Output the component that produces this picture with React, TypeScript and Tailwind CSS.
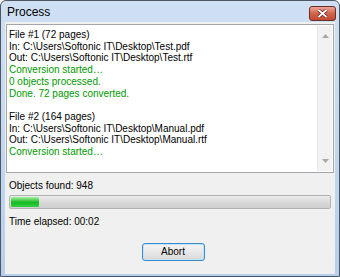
import React from "react";

const font = { fontFamily: '"Liberation Sans", Arial, sans-serif' };

function ScrollArrow({ up }: { up?: boolean }) {
  return (
    <svg width="7" height="4" viewBox="0 0 7 4">
      {up ? <path d="M0 4 L3.5 0 L7 4 Z" fill="#a8a8a8" /> : <path d="M0 0 L3.5 4 L7 0 Z" fill="#a8a8a8" />}
    </svg>
  );
}

export default function App() {
  const lines: { t: string; g?: boolean }[] = [
    { t: "File #1 (72 pages)" },
    { t: "In: C:\\Users\\Softonic IT\\Desktop\\Test.pdf" },
    { t: "Out: C:\\Users\\Softonic IT\\Desktop\\Test.rtf" },
    { t: "Conversion started\u2026", g: true },
    { t: "0 objects processed.", g: true },
    { t: "Done. 72 pages converted.", g: true },
    { t: "\u00a0" },
    { t: "File #2 (164 pages)" },
    { t: "In: C:\\Users\\Softonic IT\\Desktop\\Manual.pdf" },
    { t: "Out: C:\\Users\\Softonic IT\\Desktop\\Manual.rtf" },
    { t: "Conversion started\u2026", g: true },
  ];
  return (
    <div className="w-[340px] h-[277px] bg-white" style={font}>
      <div className="w-[340px] h-[277px] flex flex-col rounded-t-[6px] border border-[#4c5664] bg-gradient-to-b from-[#cfe0f4] to-[#b7cfea] overflow-hidden">
        {/* Title bar */}
        <div className="h-[21px] shrink-0 flex items-center justify-between pl-[6px] pr-[3px]">
          <span className="text-[12px] text-black leading-none">Process</span>
          <div className="w-[27px] h-[15px] mt-[4px] rounded-[3px] border border-[#6b2d24] bg-gradient-to-b from-[#e9a797] via-[#d1634d] to-[#c24a33] flex items-center justify-center">
            <svg width="11" height="9" viewBox="0 0 11 9">
              <path d="M1.5 1 L9.5 8 M9.5 1 L1.5 8" stroke="#5a1a12" strokeWidth="3.2" />
              <path d="M1.5 1 L9.5 8 M9.5 1 L1.5 8" stroke="#ffffff" strokeWidth="1.8" />
            </svg>
          </div>
        </div>
        {/* Client */}
        <div className="mx-[4px] mb-[2px] flex-1 bg-[#f0f0f0] flex flex-col px-[1px] pt-[2px]">
          <div className="h-[149px] border border-[#a3a6ab] bg-white flex">
            <div className="flex-1 pl-[2px] pt-[4px] text-[10px] leading-[11.7px]">
              {lines.map((l, i) => (
                <div key={i} className={l.g ? "text-[#009a00]" : "text-black"}>
                  {l.t}
                </div>
              ))}
            </div>
            <div className="w-[15px] my-[1px] mr-[1px] bg-[#f2f2f2] border-l border-[#e8e8e8] flex flex-col items-center justify-between py-[8px]">
              <ScrollArrow up />
              <ScrollArrow />
            </div>
          </div>
          <div className="pl-[3px] mt-[7px] text-[10px] leading-[12px] text-black">Objects found: 948</div>
          <div className="mx-[3px] mt-[3px] h-[14px] rounded-[2px] border border-[#b2b2b2] bg-gradient-to-b from-[#ececec] via-[#dadada] to-[#cfcfcf] p-[1px]">
            <div className="h-full w-[28px] rounded-[1px] bg-gradient-to-b from-[#9ff39f] via-[#0fba1f] to-[#30d040]" />
          </div>
          <div className="pl-[3px] mt-[7px] text-[10px] leading-[12px] text-black">Time elapsed: 00:02</div>
          <div className="flex justify-center mt-[15px] pl-[6px]">
            <button className="w-[63px] h-[18px] rounded-[3px] border border-[#3c8bd0] bg-gradient-to-b from-[#f4f4f4] via-[#e8e8e8] to-[#d9d9d9] text-[10px] text-black leading-none flex items-center justify-center shadow-[inset_0_0_0_1px_#c2e4f6]">
              Abort
            </button>
          </div>
        </div>
      </div>
    </div>
  );
}
